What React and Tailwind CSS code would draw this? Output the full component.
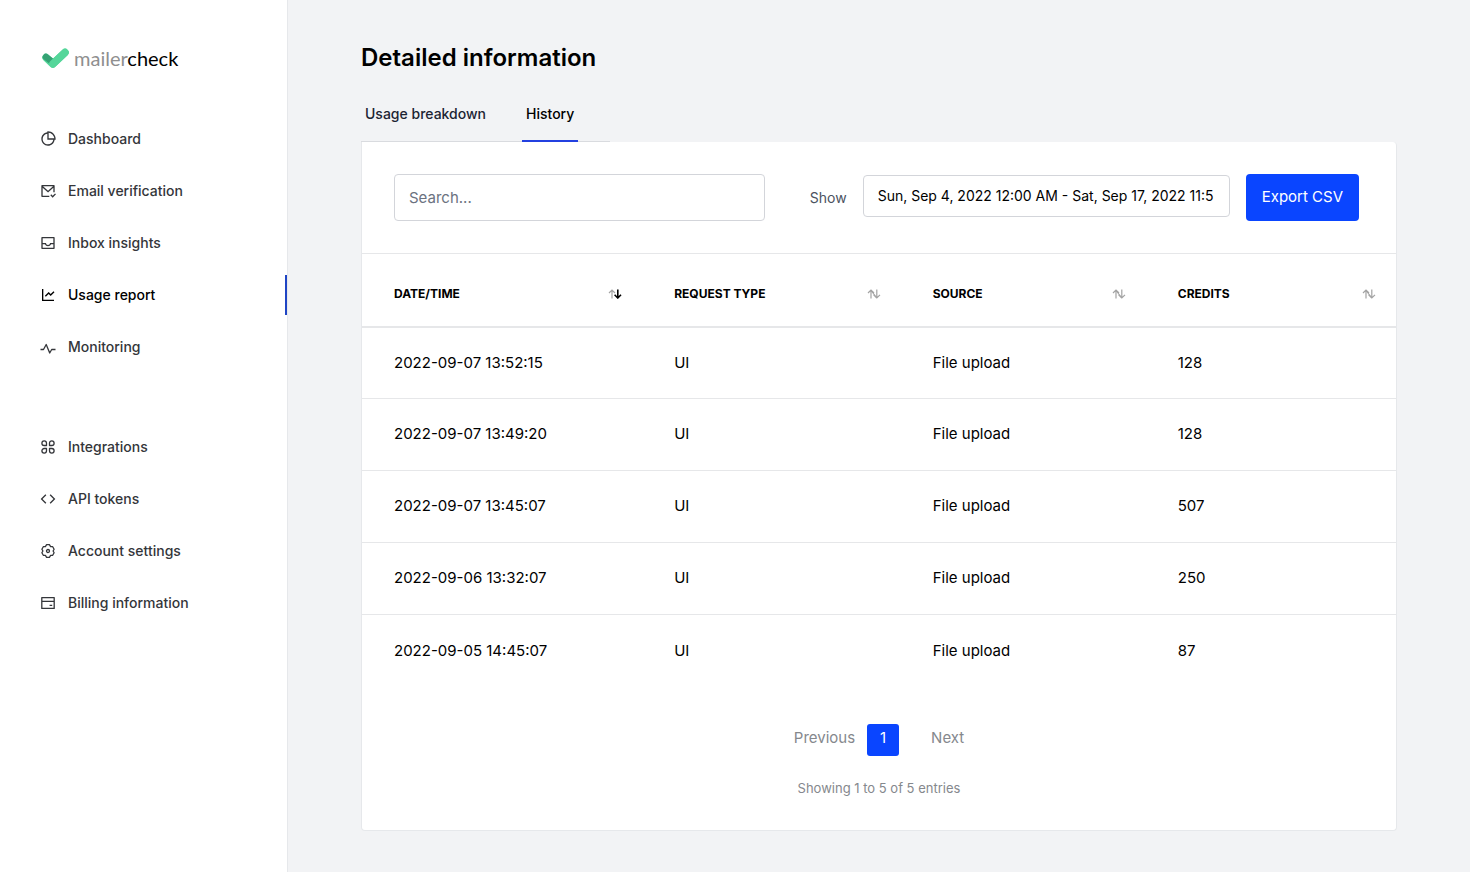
import React from 'react';
import { RiPieChart2Line, RiMailCheckLine, RiInboxLine, RiLineChartLine, RiCodeLine } from 'react-icons/ri';

const IconBase = ({ className, children }) => (
  <svg
    viewBox="0 0 16 16"
    fill="none"
    stroke="currentColor"
    strokeWidth="1.3"
    strokeLinejoin="round"
    className={className}
    aria-hidden="true"
  >
    {children}
  </svg>
);

const PulseIcon = ({ className }) => (
  <IconBase className={className}>
    <path d="M.5 10.5h3L6.2 5.5l3.5 8.5 2-3.5h3.8" />
  </IconBase>
);

// Four rounded petals
const PetalsIcon = ({ className }) => (
  <IconBase className={className}>
    <path d="M4.2 1.9a2.3 2.3 0 0 1 2.3 2.3v2.3H4.2a2.3 2.3 0 0 1 0-4.6Z" />
    <path d="M11.8 1.9a2.3 2.3 0 0 0-2.3 2.3v2.3h2.3a2.3 2.3 0 0 0 0-4.6Z" />
    <path d="M4.2 14.1a2.3 2.3 0 0 0 2.3-2.3V9.5H4.2a2.3 2.3 0 0 0 0 4.6Z" />
    <path d="M11.8 14.1a2.3 2.3 0 0 1-2.3-2.3V9.5h2.3a2.3 2.3 0 0 1 0 4.6Z" />
  </IconBase>
);

const GearIcon = ({ className }) => (
  <IconBase className={className}>
    <path d="M6.6 1.7h2.8l1.2 1.9 2.1.1 1.4 2.5L13.1 8l1 1.8-1.4 2.5-2.1.1-1.2 1.9H6.6l-1.2-1.9-2.1-.1-1.4-2.5 1-1.8-1-1.8 1.4-2.5 2.1-.1Z" />
    <circle cx="8" cy="8" r="1.5" />
  </IconBase>
);

const BillingIcon = ({ className }) => (
  <IconBase className={className}>
    <path d="M1.8 2.6h12.4v10.8H1.8ZM1.8 6.3h12.4M9.6 10.3h2.6" />
  </IconBase>
);

const mainNav = [
  { label: 'Dashboard', icon: RiPieChart2Line },
  { label: 'Email verification', icon: RiMailCheckLine },
  { label: 'Inbox insights', icon: RiInboxLine },
  { label: 'Usage report', icon: RiLineChartLine, active: true },
  { label: 'Monitoring', icon: PulseIcon },
];

const accountNav = [
  { label: 'Integrations', icon: PetalsIcon },
  { label: 'API tokens', icon: RiCodeLine },
  { label: 'Account settings', icon: GearIcon },
  { label: 'Billing information', icon: BillingIcon },
];

const columns = [
  { label: 'Date/Time', width: 'w-[27.1%]', sorted: true },
  { label: 'Request type', width: 'w-[25%]' },
  { label: 'Source', width: 'w-[23.7%]' },
  { label: 'Credits', width: 'w-[24.2%]' },
];

const rows = [
  { date: '2022-09-07 13:52:15', type: 'UI', source: 'File upload', credits: 128 },
  { date: '2022-09-07 13:49:20', type: 'UI', source: 'File upload', credits: 128 },
  { date: '2022-09-07 13:45:07', type: 'UI', source: 'File upload', credits: 507 },
  { date: '2022-09-06 13:32:07', type: 'UI', source: 'File upload', credits: 250 },
  { date: '2022-09-05 14:45:07', type: 'UI', source: 'File upload', credits: 87 },
];

const Logo = () => (
  <a href="#" className="flex items-center gap-1 pl-10">
    <svg viewBox="0 0 30 22" fill="none" strokeLinecap="round" strokeLinejoin="round" className="h-[22px] w-[30px]" aria-hidden="true">
      <path d="M6 10.5 12.8 17 25 5.5" stroke="#55d69a" strokeWidth="7.5" />
      <path d="M6 10 10.5 13.5" stroke="#35a274" strokeWidth="6.5" />
      <path d="M13 16.8 25 5.5" stroke="#55d69a" strokeWidth="7.5" />
    </svg>
    <span className="font-[Lato,sans-serif] text-xl leading-6 text-[#8f8f8f]">
      mailer<span className="text-black">check</span>
    </span>
  </a>
);

const NavList = ({ items }) => (
  <ul className="space-y-3">
    {items.map(({ label, icon: Icon, active }) => (
      <li key={label}>
        <a
          href="#"
          aria-current={active ? 'page' : undefined}
          className={`flex h-10 items-center gap-3 border-r-2 pl-10 text-sm font-medium ${
            active ? 'border-[#1f45c4] text-black' : 'border-transparent text-[#34363a]'
          }`}
        >
          <Icon className="size-4 shrink-0" />
          {label}
        </a>
      </li>
    ))}
  </ul>
);

const SortIcon = ({ sorted }) => (
  <svg viewBox="0 0 14 10" fill="none" strokeWidth="1.2" className="h-[10px] w-[14px]" aria-hidden="true">
    <path d="M4 9.5V1M1 4l3-3 3 3" stroke="#a3a3a3" />
    {!sorted && <path d="M4 1.5 9.5 8.5" stroke="#a3a3a3" />}
    <path d="M9.8 .5V9M6.6 5.8 9.8 9 13 5.8" stroke={sorted ? '#000' : '#a3a3a3'} strokeWidth={sorted ? 1.6 : 1.2} />
  </svg>
);

const HistoryTable = () => (
  <table className="w-full table-fixed border-collapse text-left">
    <thead>
      <tr className="h-[73px] border-t border-b-2 border-[#e6e7e9]">
        {columns.map(({ label, width, sorted }) => (
          <th key={label} className={`${width} pt-2 pr-5 pl-8`} aria-sort={sorted ? 'descending' : undefined}>
            <button type="button" className="flex h-9 w-full items-center justify-between text-xs font-bold text-black uppercase">
              {label}
              <SortIcon sorted={sorted} />
            </button>
          </th>
        ))}
      </tr>
    </thead>
    <tbody className="divide-y divide-[#e6e7e9] text-[15px] text-black">
      {rows.map((row) => (
        <tr key={row.date} className="h-[72px]">
          <td className="pl-8">{row.date}</td>
          <td className="pl-8">{row.type}</td>
          <td className="pl-8">{row.source}</td>
          <td className="pl-8">{row.credits}</td>
        </tr>
      ))}
    </tbody>
  </table>
);

export default function App() {
  return (
    <div className="flex min-h-screen bg-[#f2f3f5] font-[Inter,sans-serif] antialiased">
      <aside className="w-72 shrink-0 border-r border-[#e6e8eb] bg-white pt-[46px]">
        <Logo />
        <nav className="mt-[49px] space-y-[60px]">
          <NavList items={mainNav} />
          <NavList items={accountNav} />
        </nav>
      </aside>

      <main className="min-w-0 flex-1 px-[73px] pt-10 pb-10">
        <h1 className="text-2xl leading-9 font-semibold text-black">Detailed information</h1>

        <div className="mt-5 flex">
          <div className="flex gap-8 border-b border-[#d9dbdf] pr-8 text-sm font-medium">
            <a href="#" className="-mb-px border-b-2 border-transparent px-1 pt-2 pb-4 text-[#1c2433]">
              Usage breakdown
            </a>
            <a href="#" aria-current="page" className="-mb-px border-b-2 border-[#2340e0] px-1 pt-2 pb-4 text-black">
              History
            </a>
          </div>
        </div>

        <section className="rounded-r rounded-b border border-t-0 border-[#e6e8eb] bg-white">
          <div className="flex items-center py-8 pr-[37px] pl-8">
            <input
              type="search"
              aria-label="Search"
              placeholder="Search..."
              className="h-[47px] w-[371px] min-w-0 rounded border border-[#d3d5da] px-[14px] text-[15px] placeholder:text-[#6b7280]"
            />
            <label htmlFor="range" className="ml-auto text-sm text-[#4b5260]">
              Show
            </label>
            <input
              id="range"
              type="text"
              defaultValue="Sun, Sep 4, 2022 12:00 AM - Sat, Sep 17, 2022 11:5"
              className="mx-4 mb-1 h-[42px] w-[367px] rounded border border-[#d3d5da] px-[14px] text-sm text-black"
            />
            <button type="button" className="h-[47px] rounded bg-[#0a45ff] px-4 text-[15px] text-white">
              Export CSV
            </button>
          </div>

          <HistoryTable />

          <footer className="pt-[37px] pb-8 text-center text-[#85888d]">
            <div className="flex items-center justify-center text-[15px]">
              <button type="button" className="pb-[2px]">
                Previous
              </button>
              <button type="button" aria-current="page" className="mr-8 ml-3 size-8 rounded-[3px] bg-[#0a45ff] pb-[2px] text-white">
                1
              </button>
              <button type="button" className="pb-[2px]">
                Next
              </button>
            </div>
            <p className="mt-[22px] text-[13px] leading-5">Showing 1 to 5 of 5 entries</p>
          </footer>
        </section>
      </main>
    </div>
  );
}
